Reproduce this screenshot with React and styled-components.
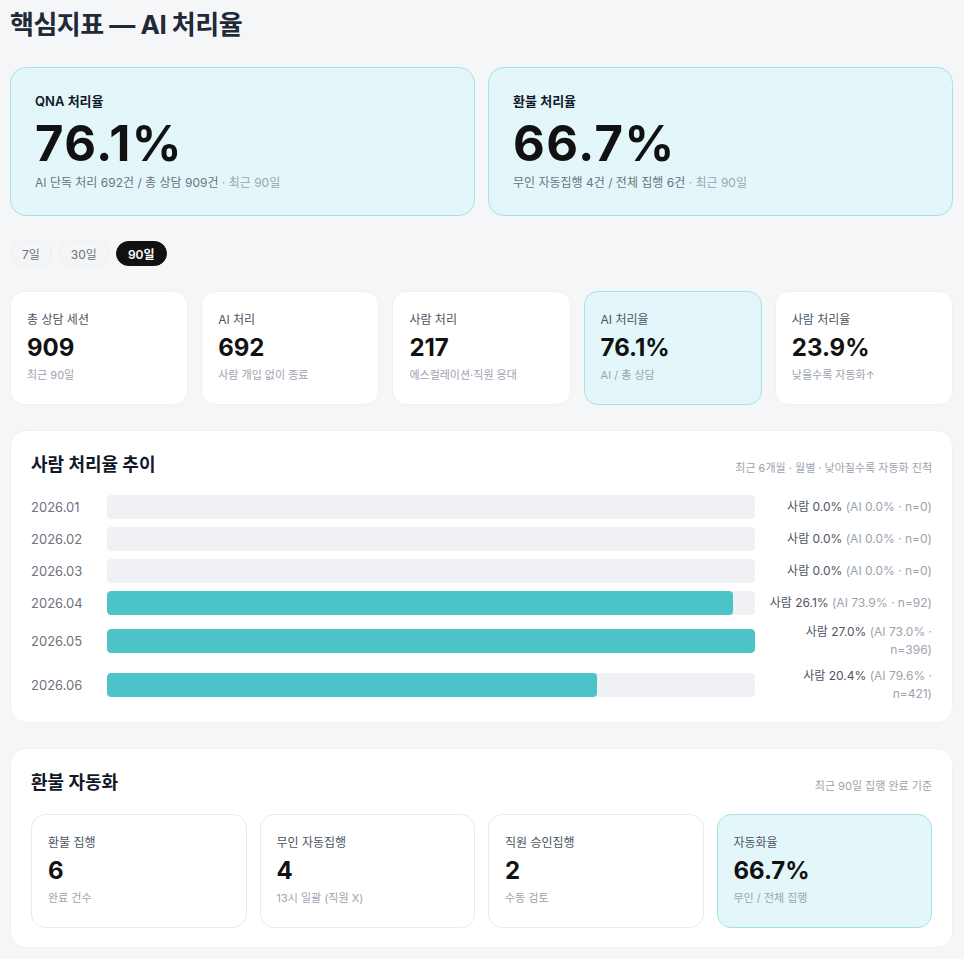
import React, { useState } from 'react'
import styled, { createGlobalStyle, css } from 'styled-components'

const GlobalStyle = createGlobalStyle`
  * { box-sizing: border-box; }
  body {
    margin: 0;
    background: #f5f6f8;
    font-family: Inter, "Noto Sans CJK KR", "Noto Sans", sans-serif;
    color: #111827;
  }
`

const heroCards = [
  { label: 'QNA 처리율', value: '76.1%', desc: 'AI 단독 처리 692건 / 총 상담 909건', muted: ' · 최근 90일' },
  { label: '환불 처리율', value: '66.7%', desc: '무인 자동집행 4건 / 전체 집행 6건', muted: ' · 최근 90일' },
]

const stats = [
  { label: '총 상담 세션', value: '909', sub: '최근 90일' },
  { label: 'AI 처리', value: '692', sub: '사람 개입 없이 종료' },
  { label: '사람 처리', value: '217', sub: '에스컬레이션·직원 응대' },
  { label: 'AI 처리율', value: '76.1%', sub: 'AI / 총 상담', accent: true },
  { label: '사람 처리율', value: '23.9%', sub: '낮을수록 자동화↑' },
]

const trend = [
  { month: '2026.01', human: 0, ai: 0, n: 0 },
  { month: '2026.02', human: 0, ai: 0, n: 0 },
  { month: '2026.03', human: 0, ai: 0, n: 0 },
  { month: '2026.04', human: 26.1, ai: 73.9, n: 92 },
  { month: '2026.05', human: 27.0, ai: 73.0, n: 396 },
  { month: '2026.06', human: 20.4, ai: 79.6, n: 421 },
]

const refunds = [
  { label: '환불 집행', value: '6', sub: '완료 건수' },
  { label: '무인 자동집행', value: '4', sub: '13시 일괄 (직원 X)' },
  { label: '직원 승인집행', value: '2', sub: '수동 검토' },
  { label: '자동화율', value: '66.7%', sub: '무인 / 전체 집행', accent: true },
]

const periods = ['7일', '30일', '90일']

export default function App() {
  const [period, setPeriod] = useState('90일')
  const maxHuman = Math.max(...trend.map(t => t.human)) || 1

  return (
    <Page>
      <GlobalStyle />
      <Title>핵심지표 — AI 처리율</Title>

      <HeroGrid>
        {heroCards.map(h => (
          <HeroCard key={h.label}>
            <HeroLabel>{h.label}</HeroLabel>
            <HeroValue>{h.value}</HeroValue>
            <HeroDesc>{h.desc}<Muted>{h.muted}</Muted></HeroDesc>
          </HeroCard>
        ))}
      </HeroGrid>

      <Tabs>
        {periods.map(p => (
          <Tab key={p} $active={period === p} onClick={() => setPeriod(p)}>{p}</Tab>
        ))}
      </Tabs>

      <StatGrid>
        {stats.map(s => (
          <StatCard key={s.label} $accent={s.accent}>
            <StatLabel>{s.label}</StatLabel>
            <StatValue>{s.value}</StatValue>
            <StatSub>{s.sub}</StatSub>
          </StatCard>
        ))}
      </StatGrid>

      <Panel>
        <PanelHeader>
          <PanelTitle>사람 처리율 추이</PanelTitle>
          <PanelNote>최근 6개월 · 월별 · 낮아질수록 자동화 진척</PanelNote>
        </PanelHeader>
        <Rows>
          {trend.map(t => (
            <Row key={t.month}>
              <Month>{t.month}</Month>
              <Track>
                {t.human > 0 && <Fill style={{ width: `${(t.human / maxHuman) * 100}%` }} />}
              </Track>
              <RowValue>
                사람 {t.human.toFixed(1)}% <Muted>(AI {t.ai.toFixed(1)}% · n={t.n})</Muted>
              </RowValue>
            </Row>
          ))}
        </Rows>
      </Panel>

      <Panel>
        <PanelHeader>
          <PanelTitle>환불 자동화</PanelTitle>
          <PanelNote>최근 90일 집행 완료 기준</PanelNote>
        </PanelHeader>
        <RefundGrid>
          {refunds.map(r => (
            <StatCard key={r.label} $accent={r.accent} $outlined>
              <StatLabel>{r.label}</StatLabel>
              <StatValue>{r.value}</StatValue>
              <StatSub>{r.sub}</StatSub>
            </StatCard>
          ))}
        </RefundGrid>
      </Panel>
    </Page>
  )
}

const Page = styled.div`
  padding: 8px 11px 12px 10px;
  display: flex;
  flex-direction: column;
  gap: 25px;
`

const Title = styled.h1`
  margin: 0;
  font-size: 26px;
  line-height: 34px;
  font-weight: 700;
  color: #1f2937;
  letter-spacing: -0.5px;
`

const HeroGrid = styled.div`
  display: grid;
  grid-template-columns: 1fr 1fr;
  gap: 13px;
`

const accentCard = css`
  background: #e3f7fa;
  border-color: #a6e2e8;
`

const HeroCard = styled.div`
  border: 1px solid #a6e2e8;
  background: #e3f7fa;
  border-radius: 16px;
  padding: 24px;
  display: flex;
  flex-direction: column;
`

const HeroLabel = styled.div`
  font-size: 13px;
  line-height: 18px;
  font-weight: 600;
  color: #111827;
`

const HeroValue = styled.div`
  margin-top: 6px;
  font-size: 49px;
  line-height: 56px;
  font-weight: 700;
  color: #111;
  letter-spacing: 1.4px;
`

const HeroDesc = styled.div`
  margin-top: 3px;
  font-size: 12px;
  line-height: 16px;
  color: #6b7280;
`

const Muted = styled.span`
  color: #9ca3af;
`

const Tabs = styled.div`
  display: flex;
  gap: 7px;
`

const Tab = styled.button`
  height: 25px;
  padding: 0 11px;
  border-radius: 13px;
  font-family: inherit;
  font-size: 12px;
  cursor: pointer;
  border: 1px solid ${p => (p.$active ? '#111' : '#eceef1')};
  background: ${p => (p.$active ? '#111' : '#f4f5f7')};
  color: ${p => (p.$active ? '#fff' : '#6b7280')};
  font-weight: ${p => (p.$active ? 600 : 400)};
`

const StatGrid = styled.div`
  display: grid;
  grid-template-columns: repeat(5, 1fr);
  gap: 13px;
`

const StatCard = styled.div`
  background: #fff;
  border: 1px solid ${p => (p.$outlined ? '#e8eaed' : '#f0f1f3')};
  border-radius: 14px;
  padding: 19px 16px 21px;
  display: flex;
  flex-direction: column;
  ${p => p.$accent && accentCard}
`

const StatLabel = styled.div`
  font-size: 12px;
  line-height: 18px;
  color: #4b5563;
`

const StatValue = styled.div`
  margin-top: 4px;
  font-size: 24px;
  line-height: 30px;
  font-weight: 700;
  color: #111;
`

const StatSub = styled.div`
  margin-top: 4px;
  font-size: 11px;
  line-height: 16px;
  color: #9ca3af;
`

const Panel = styled.section`
  background: #fff;
  border: 1px solid #f0f1f3;
  border-radius: 16px;
  padding: 21px 20px 19px;
`

const PanelHeader = styled.div`
  display: flex;
  align-items: center;
  justify-content: space-between;
`

const PanelTitle = styled.h2`
  margin: 0;
  font-size: 18px;
  line-height: 26px;
  font-weight: 700;
  color: #111827;
`

const PanelNote = styled.div`
  font-size: 11px;
  color: #9ca3af;
  margin-top: 3px;
`

const Rows = styled.div`
  margin-top: 17px;
  display: flex;
  flex-direction: column;
  gap: 8px;
`

const Row = styled.div`
  display: grid;
  grid-template-columns: 64px 1fr 165px;
  column-gap: 12px;
  align-items: center;
  min-height: 24px;
`

const Month = styled.div`
  font-size: 13px;
  color: #6b7280;
`

const Track = styled.div`
  height: 24px;
  background: #eff1f5;
  border-radius: 4px;
  overflow: hidden;
`

const Fill = styled.div`
  height: 100%;
  background: #4cc3c9;
  border-radius: 4px;
`

const RowValue = styled.div`
  font-size: 12px;
  line-height: 18px;
  text-align: right;
  color: #4b5563;
`

const RefundGrid = styled.div`
  margin-top: 18px;
  display: grid;
  grid-template-columns: repeat(4, 1fr);
  gap: 13px;
`
